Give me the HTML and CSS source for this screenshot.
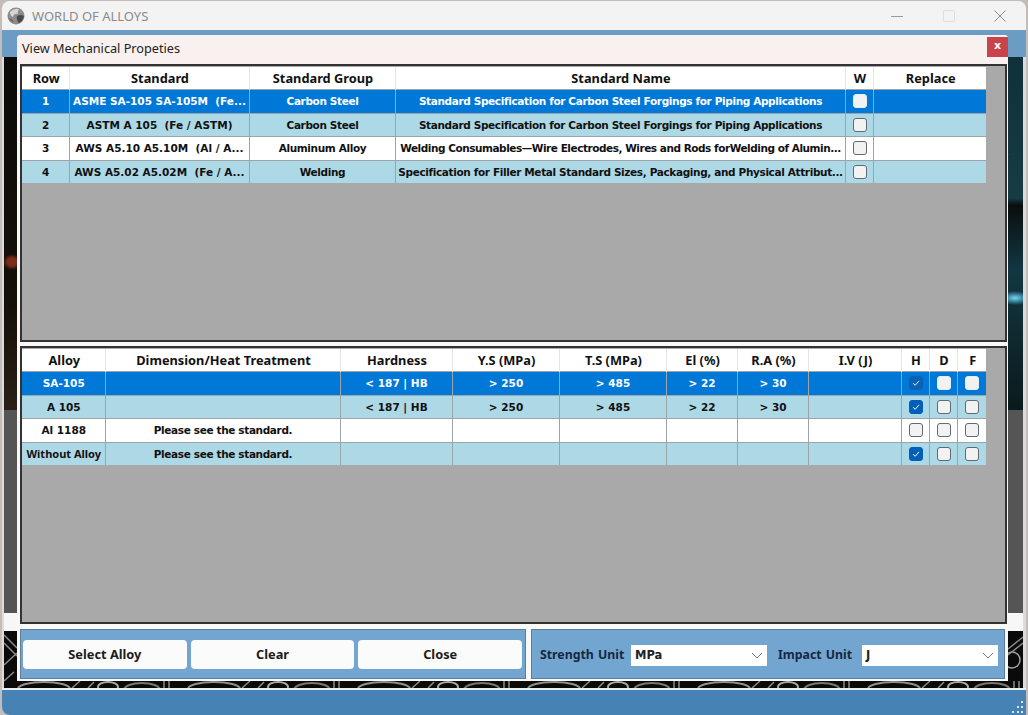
FILE: index.html
```html
<!DOCTYPE html>
<html lang="en">
<head>
    <meta charset="UTF-8">
    <title>World of Alloys</title>
    <link rel="stylesheet" href="styles.css">
</head>
<body>
<div class="window">
    <!-- Title bar -->
    <div class="titlebar">
        <svg class="app-icon" width="18" height="18" viewBox="0 0 18 18">
            <circle cx="9" cy="9" r="8.5" fill="#8c8c8c"/>
            <path d="M3 5 Q7 1 12 2 Q10 5 11 7 Q7 6 6 10 Q3 9 3 5Z" fill="#d6d6d6"/>
            <path d="M10 9 Q14 7 17 9 Q16 14 12 16 Q9 13 10 9Z" fill="#4a4a4a"/>
            <path d="M2 11 Q5 12 7 15 Q4 15 2 11Z" fill="#5c5c5c"/>
        </svg>
        <span class="app-name">WORLD OF ALLOYS</span>
        <div class="win-controls">
            <div class="win-btn">
                <svg width="12" height="12" viewBox="0 0 12 12"><path d="M0 6.5H12" stroke="#9a9a9a" stroke-width="1"/></svg>
            </div>
            <div class="win-btn">
                <svg width="12" height="12" viewBox="0 0 12 12"><rect x="0.5" y="0.5" width="11" height="11" rx="1.5" fill="none" stroke="#dedede"/></svg>
            </div>
            <div class="win-btn">
                <svg width="12" height="12" viewBox="0 0 12 12"><path d="M0.5 0.5L11.5 11.5M11.5 0.5L0.5 11.5" stroke="#8a8a8a" stroke-width="1"/></svg>
            </div>
        </div>
    </div>

    <div class="top-strip"></div>

    <!-- Main window background -->
    <div class="wall">
        <div class="wall-dark"></div>
        <div class="wall-grey"></div>
        <div class="wall-white"></div>
        <svg class="wall-pattern" width="1019" height="57" viewBox="0 0 1019 57">
            <defs>
                <pattern id="loops" width="170" height="57" patternUnits="userSpaceOnUse">
                    <rect width="170" height="57" fill="#0a0a0a"/>
                    <ellipse cx="40" cy="58" rx="26" ry="7" fill="none" stroke="#8f8f8f" stroke-width="2"/>
                    <ellipse cx="104" cy="56" rx="10" ry="5" fill="none" stroke="#a8a8a8" stroke-width="2"/>
                    <ellipse cx="138" cy="59" rx="18" ry="7" fill="none" stroke="#777" stroke-width="2"/>
                    <path d="M68 57L76 50M84 57L90 51M160 50V57M165 50V57" stroke="#8a8a8a" stroke-width="1.5" fill="none"/>
                </pattern>
            </defs>
            <rect width="1019" height="57" fill="url(#loops)"/>
            <!-- the bits that show beside the dialog -->
            <rect width="13" height="50" fill="#0a0a0a"/>
            <path d="M0 4L13 17M0 12L13 25M0 34L13 22M0 50L10 41" stroke="#8a8a8a" stroke-width="1.5" fill="none"/>
            <rect x="1004" width="15" height="50" fill="#0a0a0a"/>
            <circle cx="1008" cy="29" r="8" fill="none" stroke="#a0a0a0" stroke-width="1.5"/>
            <path d="M1004 18L1019 6M1004 24L1019 12" stroke="#8a8a8a" stroke-width="1.5" fill="none"/>
        </svg>
    </div>

    <div class="white-line"></div>

    <div class="statusbar">
        <svg width="13" height="13" viewBox="0 0 13 13" fill="#dbe6ef">
            <rect x="10" y="0" width="2" height="2"/>
            <rect x="6" y="5" width="2" height="2"/><rect x="10" y="5" width="2" height="2"/>
            <rect x="1" y="10" width="2" height="2"/><rect x="6" y="10" width="2" height="2"/><rect x="10" y="10" width="2" height="2"/>
        </svg>
    </div>

    <!-- Dialog -->
    <div class="dialog">
        <div class="dialog-head">
            <span class="dialog-title">View Mechanical Propeties</span>
            <div class="dialog-close">x</div>
        </div>

        <div class="panel">
            <table class="grid">
                <colgroup>
                    <col class="w47"><col class="w180"><col class="w146"><col class="w450"><col class="w28"><col class="w113">
                </colgroup>
                <tr class="head"><th>Row</th><th>Standard</th><th>Standard Group</th><th>Standard Name</th><th>W</th><th>Replace</th></tr>
                <tr class="selected">
                    <td>1</td><td>ASME SA-105 SA-105M&nbsp; (Fe...</td><td class="txt">Carbon Steel</td>
                    <td class="txt">Standard Specification for Carbon Steel Forgings for Piping Applications</td>
                    <td><span class="check"></span></td><td></td>
                </tr>
                <tr class="alt">
                    <td>2</td><td>ASTM A 105&nbsp; (Fe / ASTM)</td><td class="txt">Carbon Steel</td>
                    <td class="txt">Standard Specification for Carbon Steel Forgings for Piping Applications</td>
                    <td><span class="check"></span></td><td></td>
                </tr>
                <tr>
                    <td>3</td><td>AWS A5.10 A5.10M&nbsp; (Al / A...</td><td class="txt">Aluminum Alloy</td>
                    <td class="txt long">Welding Consumables—Wire Electrodes, Wires and Rods forWelding of Alumin...</td>
                    <td><span class="check"></span></td><td></td>
                </tr>
                <tr class="alt">
                    <td>4</td><td>AWS A5.02 A5.02M&nbsp; (Fe / A...</td><td class="txt">Welding</td>
                    <td class="txt">Specification for Filler Metal Standard Sizes, Packaging, and Physical Attribut...</td>
                    <td><span class="check"></span></td><td></td>
                </tr>
            </table>
        </div>

        <div class="panel">
            <table class="grid">
                <colgroup>
                    <col class="w83"><col class="w235"><col class="w112"><col class="w107"><col class="w107"><col class="w71"><col class="w71"><col class="w93"><col class="w28"><col class="w28"><col class="w29">
                </colgroup>
                <tr class="head"><th>Alloy</th><th>Dimension/Heat Treatment</th><th>Hardness</th><th>Y.S (MPa)</th><th>T.S (MPa)</th><th>El (%)</th><th>R.A (%)</th><th>I.V (J)</th><th>H</th><th>D</th><th>F</th></tr>
                <tr class="selected">
                    <td>SA-105</td><td></td><td>&lt; 187 | HB</td><td>&gt; 250</td><td>&gt; 485</td><td>&gt; 22</td><td>&gt; 30</td><td></td>
                    <td><span class="check on"><svg width="10" height="10" viewBox="0 0 10 10"><path d="M2 5.2L4.2 7.3L8 2.8" fill="none" stroke="#dce9f5" stroke-width="1"/></svg></span></td>
                    <td><span class="check"></span></td><td><span class="check"></span></td>
                </tr>
                <tr class="alt">
                    <td>A 105</td><td></td><td>&lt; 187 | HB</td><td>&gt; 250</td><td>&gt; 485</td><td>&gt; 22</td><td>&gt; 30</td><td></td>
                    <td><span class="check on"><svg width="10" height="10" viewBox="0 0 10 10"><path d="M2 5.2L4.2 7.3L8 2.8" fill="none" stroke="#fff" stroke-width="1"/></svg></span></td>
                    <td><span class="check"></span></td><td><span class="check"></span></td>
                </tr>
                <tr>
                    <td>Al 1188</td><td class="txt">Please see the standard.</td><td></td><td></td><td></td><td></td><td></td><td></td>
                    <td><span class="check"></span></td><td><span class="check"></span></td><td><span class="check"></span></td>
                </tr>
                <tr class="alt">
                    <td class="tight">Without Alloy</td><td class="txt">Please see the standard.</td><td></td><td></td><td></td><td></td><td></td><td></td>
                    <td><span class="check on"><svg width="10" height="10" viewBox="0 0 10 10"><path d="M2 5.2L4.2 7.3L8 2.8" fill="none" stroke="#fff" stroke-width="1"/></svg></span></td>
                    <td><span class="check"></span></td><td><span class="check"></span></td>
                </tr>
            </table>
        </div>

        <div class="footer">
            <div class="footer-box actions">
                <button>Select Alloy</button>
                <button>Clear</button>
                <button>Close</button>
            </div>
            <div class="footer-box units">
                <span class="unit-label">Strength Unit</span>
                <div class="select">
                    <span>MPa</span>
                    <svg width="12" height="7" viewBox="0 0 12 7"><path d="M1 1L6 6L11 1" fill="none" stroke="#777" stroke-width="1"/></svg>
                </div>
                <span class="unit-label second">Impact Unit</span>
                <div class="select">
                    <span>J</span>
                    <svg width="12" height="7" viewBox="0 0 12 7"><path d="M1 1L6 6L11 1" fill="none" stroke="#777" stroke-width="1"/></svg>
                </div>
            </div>
        </div>
    </div>
</div>
</body>
</html>
```

FILE: styles.css
```css
body {
    margin: 0;
    height: 715px;
    overflow: hidden;
    background-color: #c4bcb9;
}
.window {
    position: relative;
    margin: 1px 2px 0 2px;
    display: flex;
    flex-direction: column;
    height: 714px;
    border-radius: 8px 8px 0 8px;
    overflow: hidden;
    background-color: #dcdcdc;
}
.titlebar {
    height: 29px;
    flex-shrink: 0;
    display: flex;
    align-items: center;
    padding-left: 5px;
    background-color: #f3f3f3;
}
.app-name {
    margin-left: 7px;
    font-family: "Noto Sans", sans-serif;
    font-size: 13px;
    color: #8b8b8b;
}
.win-controls {
    margin-left: auto;
    display: flex;
}
.win-btn {
    width: 51.5px;
    height: 29px;
    display: flex;
    align-items: center;
    justify-content: center;
}
.top-strip {
    height: 27px;
    flex-shrink: 0;
    background-color: #6a9cc4;
}
.wall {
    height: 631px;
    flex-shrink: 0;
    margin: 0 3px 0 2px;
    display: flex;
    flex-direction: column;
}
.wall-dark {
    height: 353px;
    background:
        radial-gradient(ellipse 9px 8px at 8px 205px, #7a2c18 0, #7a2c18 50%, transparent 100%),
        radial-gradient(ellipse 16px 7px at 1011px 241px, #7fd4e8 0, #3d8ea6 45%, transparent 100%),
        linear-gradient(168deg, transparent 0, transparent 12%, #5a2a20 12%, #5a2a20 12.4%, transparent 12.4%) 1004px 90px / 15px 60px no-repeat,
        linear-gradient(to bottom, #10303a 0, #163c46 40%, #0a0d0e 42%, #123742 60%, #0a1a1c 100%) 1004px 0 / 15px 353px no-repeat,
        linear-gradient(to bottom, #0c0a08 0, #14100a 70%, #2a2016 100%) 0 0 / 13px 353px no-repeat;
    background-color: #0c0c0c;
}
.wall-grey {
    height: 203px;
    background-color: #555;
}
.wall-white {
    height: 18px;
    background-color: #f7f7f7;
}
.wall-pattern {
    display: block;
    height: 57px;
}
.white-line {
    height: 2px;
    flex-shrink: 0;
    background-color: #e8eef2;
}
.statusbar {
    flex: 1;
    display: flex;
    justify-content: flex-end;
    align-items: flex-end;
    padding: 0 2px 1px 0;
    background-color: #4682b4;
}

/* dialog floats over the main window */
.dialog {
    position: absolute;
    left: 15px;
    top: 34px;
    width: 991px;
    height: 646px;
    display: flex;
    flex-direction: column;
    box-sizing: border-box;
    padding: 0 1px 0 3px;
    border-radius: 4px 4px 0 0;
    background-color: #f8f8f8;
}
.dialog-head {
    height: 29px;
    flex-shrink: 0;
    margin: 0 -1px 0 -3px;
    padding: 2px 0 0 5px;
    box-sizing: border-box;
    display: flex;
    justify-content: space-between;
    align-items: flex-start;
    border-radius: 4px 4px 0 0;
    background-color: #f9f1ef;
}
.dialog-title {
    margin-top: 2px;
    font-family: "Noto Sans", sans-serif;
    font-size: 12.7px;
    color: #222;
}
.dialog-close {
    width: 21px;
    height: 20px;
    line-height: 18px;
    text-align: center;
    font-family: "DejaVu Sans", sans-serif;
    font-size: 11px;
    font-weight: bold;
    color: white;
    background-color: #c9444a;
}
.panel {
    height: 278px;
    flex-shrink: 0;
    box-sizing: border-box;
    margin-bottom: 4px;
    padding-top: 1px;
    border: 2px solid #333;
    background-color: #a9a9a9;
}
.grid {
    width: 964px;
    table-layout: fixed;
    border-collapse: collapse;
    font-family: "DejaVu Sans", sans-serif;
    font-size: 10.5px;
    font-weight: bold;
    color: #111;
}
.w28 { width: 28px; }
.w29 { width: 29px; }
.w47 { width: 47px; }
.w71 { width: 71px; }
.w83 { width: 83px; }
.w93 { width: 93px; }
.w107 { width: 107px; }
.w112 { width: 112px; }
.w113 { width: 113px; }
.w146 { width: 146px; }
.w180 { width: 180px; }
.w235 { width: 235px; }
.w450 { width: 450px; }
.grid th {
    height: 22px;
    padding: 0 0 0 2px;
    font-family: "Noto Sans", sans-serif;
    font-size: 12.8px;
    text-align: center;
    background-color: white;
    border-left: 1px solid #e6e6e6;
}
.grid th:first-child {
    border-left: none;
}
.grid td {
    height: 22.5px;
    padding: 0 0 0 1px;
    text-align: center;
    white-space: nowrap;
    overflow: hidden;
    background-color: white;
    border-left: 1px solid #9aa4a9;
    border-top: 1px solid #9aa4a9;
}
.grid td:first-child {
    border-left: none;
}
.grid td.txt {
    letter-spacing: -0.36px;
}
.grid td.txt.long {
    letter-spacing: -0.46px;
}
.grid tr.alt td {
    background-color: #add8e6;
}
.grid tr.selected td {
    background-color: #0078d7;
    color: white;
}
.grid .tight {
    font-family: "Noto Sans", sans-serif;
    font-size: 11px;
}
.check {
    display: inline-flex;
    align-items: center;
    justify-content: center;
    vertical-align: middle;
    width: 14px;
    height: 14px;
    box-sizing: border-box;
    border: 1px solid #5f6b70;
    border-radius: 3px;
    background-color: #f2f2f2;
}
.selected .check {
    border-color: #e6eef5;
}
.check.on {
    border-color: #005fb8;
    background-color: #005fb8;
}
.selected .check.on {
    border-color: #0a62b4;
    background-color: #0a62b4;
}
.footer {
    margin-top: 1px;
    display: flex;
    gap: 5px;
}
.footer-box {
    height: 50px;
    box-sizing: border-box;
    display: flex;
    align-items: center;
    border: 1px solid #5f7d96;
    background-color: #72a5cf;
}
.actions {
    width: 506px;
    gap: 4px;
    padding: 0 3px 0 2px;
}
.actions button {
    flex: 1;
    height: 29px;
    padding: 0;
    border: none;
    border-radius: 4px;
    background-color: #fbfbfb;
    font-family: "Noto Sans", sans-serif;
    font-size: 12.8px;
    font-weight: bold;
    color: #1c1c1c;
}
.units {
    width: 474px;
    padding-left: 8px;
}
.unit-label {
    width: 91px;
    flex-shrink: 0;
    font-family: "Noto Sans", sans-serif;
    font-size: 12.3px;
    font-weight: bold;
    word-spacing: 1px;
    color: #16283f;
}
.unit-label.second {
    width: 84px;
    margin-left: 11px;
}
.select {
    width: 136px;
    height: 21px;
    flex-shrink: 0;
    margin-top: 2px;
    box-sizing: border-box;
    padding: 0 4px;
    display: flex;
    align-items: center;
    justify-content: space-between;
    background-color: white;
    font-family: "DejaVu Sans", sans-serif;
    font-size: 11.5px;
    font-weight: bold;
    color: #222;
}
```
